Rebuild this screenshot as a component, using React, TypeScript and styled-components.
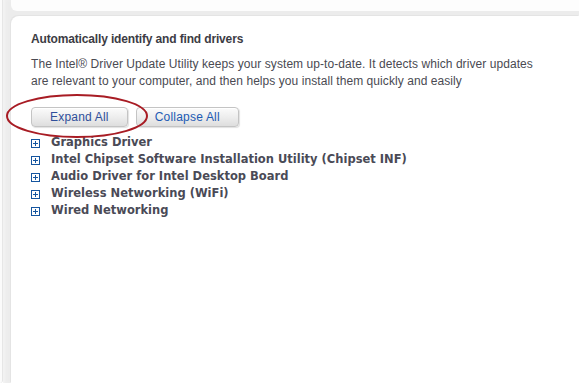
import React from "react";
import styled, { createGlobalStyle } from "styled-components";

const GlobalStyle = createGlobalStyle`
  html, body { margin: 0; padding: 0; background: #ffffff; }
  body { font-family: "Liberation Sans", Arial, sans-serif; }
  #root { height: 383px; overflow: hidden; }
`;

const Page = styled.div`
  display: grid;
  grid-template-columns: 3px 1fr;
  height: 383px;
  overflow: hidden;
`;

const SideRail = styled.div`
  background: #fbfbfb;
  border-right: 1px solid #e6e6e6;
  border-bottom-right-radius: 4px;
`;

const Frame = styled.div`
  display: flex;
  flex-direction: column;
  background: #ececec;
  padding-left: 8px;
  box-shadow: inset 3px 0 4px -2px #f7f7f7;
  min-width: 0;
`;

const TopBar = styled.div`
  height: 11px;
  background: #fdfdfd;
  border-bottom-left-radius: 6px;
  flex: none;
`;

const Panel = styled.section`
  margin-top: 5px;
  flex: 1;
  background: #ffffff;
  border-top-left-radius: 8px;
  box-shadow: -1px -1px 0 #e4e4e4;
  padding: 16px 0 0 20px;
  color: #474747;
`;

const Heading = styled.h2`
  margin: 0;
  font: bold 12px/15px "Liberation Sans", Arial, sans-serif;
  color: #3c3c44;
  letter-spacing: -0.15px;
`;

const Intro = styled.p`
  margin: 9px 0 0;
  width: 515px;
  font: 12px/17px "Liberation Sans", Arial, sans-serif;
  letter-spacing: 0.065px;
  color: #4a4a52;
`;

const ButtonRow = styled.div`
  position: relative;
  display: flex;
  gap: 8px;
  margin-top: 17px;
`;

const ActionButton = styled.button`
  height: 20px;
  padding: 0 18px;
  border: 1px solid #c4c4c4;
  border-radius: 4px;
  background: linear-gradient(#fbfbfb, #ececec 55%, #dedede);
  box-shadow: 1px 1px 1px rgba(0, 0, 0, 0.12), inset 0 1px 0 #ffffff;
  font: 12px/18px "Liberation Sans", Arial, sans-serif;
  letter-spacing: 0.2px;
  color: ${(p: { $tone?: string }) => p.$tone || "#2a4fa0"};
  cursor: pointer;
`;

const Annotation = styled.svg`
  position: absolute;
  left: -26px;
  top: -14px;
  width: 144px;
  height: 46px;
  overflow: visible;
  pointer-events: none;
`;

const DriverList = styled.ul`
  list-style: none;
  margin: 7px 0 0;
  padding: 0;
`;

const DriverItem = styled.li`
  display: flex;
  align-items: center;
  gap: 11px;
  height: 17px;
  font: bold 11.5px/17px "DejaVu Sans", Verdana, sans-serif;
  color: #4a4a56;
`;

const PlusBox = styled.span`
  position: relative;
  flex: none;
  width: 7px;
  height: 7px;
  border: 1px solid #15559f;
  margin-top: 1px;
  &::before, &::after {
    content: "";
    position: absolute;
    background: #15559f;
  }
  &::before { left: 1px; top: 3px; width: 5px; height: 1px; }
  &::after { left: 3px; top: 1px; width: 1px; height: 5px; }
`;

const drivers = [
  "Graphics Driver",
  "Intel Chipset Software Installation Utility (Chipset INF)",
  "Audio Driver for Intel Desktop Board",
  "Wireless Networking (WiFi)",
  "Wired Networking",
];

export default function App() {
  return (
    <>
      <GlobalStyle />
      <Page>
        <SideRail />
        <Frame>
          <TopBar />
          <Panel>
            <Heading>Automatically identify and find drivers</Heading>
            <Intro>
              The Intel® Driver Update Utility keeps your system up-to-date. It detects which driver updates
              are relevant to your computer, and then helps you install them quickly and easily
            </Intro>
            <ButtonRow>
              <ActionButton $tone="#2f4f9a">Expand All</ActionButton>
              <ActionButton $tone="#1d5bb4">Collapse All</ActionButton>
              <Annotation viewBox="0 0 144 46">
                <ellipse cx="72" cy="23" rx="70" ry="21" fill="none" stroke="#a81c24" strokeWidth="2" />
              </Annotation>
            </ButtonRow>
            <DriverList>
              {drivers.map((d) => (
                <DriverItem key={d}>
                  <PlusBox />
                  {d}
                </DriverItem>
              ))}
            </DriverList>
          </Panel>
        </Frame>
      </Page>
    </>
  );
}
